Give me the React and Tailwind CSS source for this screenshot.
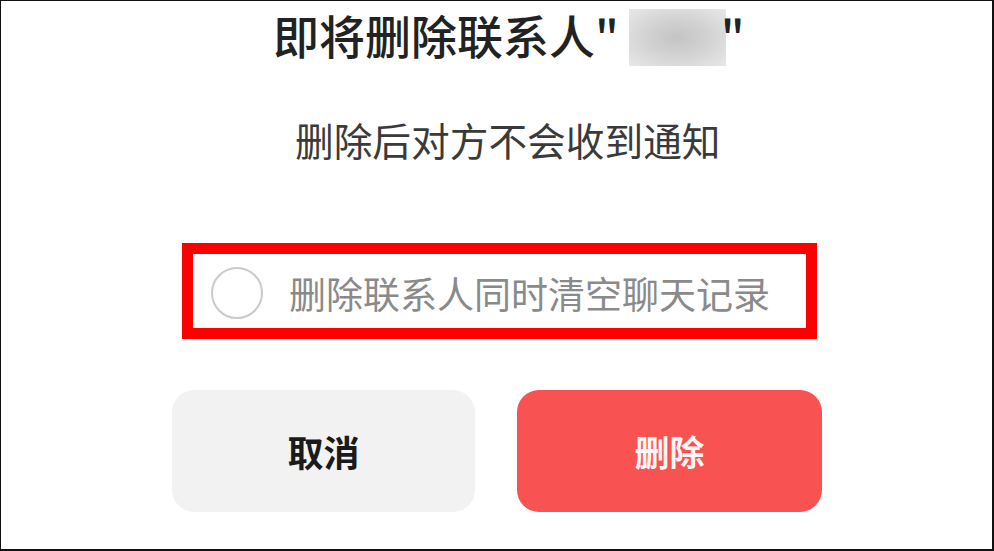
export default function App() {
  return (
    <div
      className="w-[994px] h-[551px] bg-white border-t border-l border-r-2 border-b-2 border-[#111] flex flex-col overflow-hidden"
      style={{ fontFamily: '"Noto Sans CJK SC", "Noto Sans", sans-serif' }}
    >
      {/* Title */}
      <div className="flex items-start ml-[272px] mt-[8px] h-[57px]">
        <span className="text-[46px] leading-[46px] mt-[2px] font-medium text-[#222] whitespace-nowrap">
          即将删除联系人"
        </span>
        <div className="w-[97px] h-[57px] ml-[10px] bg-[radial-gradient(ellipse_at_center,#c4c4c4_0%,#d2d2d2_45%,#e8e8e8_100%)]" />
        <span className="text-[46px] leading-[46px] mt-[2px] -ml-[5px] font-medium text-[#222]">"</span>
      </div>

      {/* Subtitle */}
      <div className="ml-[294px] mt-[54px] text-[38.7px] leading-[39px] text-[#3a3a3a] whitespace-nowrap">
        删除后对方不会收到通知
      </div>

      {/* Highlighted checkbox row */}
      <div className="ml-[181px] mt-[84px] w-[635px] h-[96px] border-[11px] border-[#ff0000] flex items-center pl-[18px] pt-[3px]">
        <div className="w-[52px] h-[52px] rounded-full border-2 border-[#cacaca] shrink-0" />
        <span className="ml-[26px] text-[37px] leading-[40px] text-[#8a8a8a] whitespace-nowrap">
          删除联系人同时清空聊天记录
        </span>
      </div>

      {/* Buttons */}
      <div className="flex ml-[171px] mt-[51px] gap-[42px]">
        <button className="w-[303px] h-[122px] rounded-[22px] bg-[#f2f2f2] text-[36px] font-bold text-[#1a1a1a] flex items-center justify-center">
          取消
        </button>
        <button className="w-[305px] h-[122px] rounded-[22px] bg-[#f85252] text-[35px] font-bold text-[#fff5f5] flex items-center justify-center">
          删除
        </button>
      </div>
    </div>
  );
}
